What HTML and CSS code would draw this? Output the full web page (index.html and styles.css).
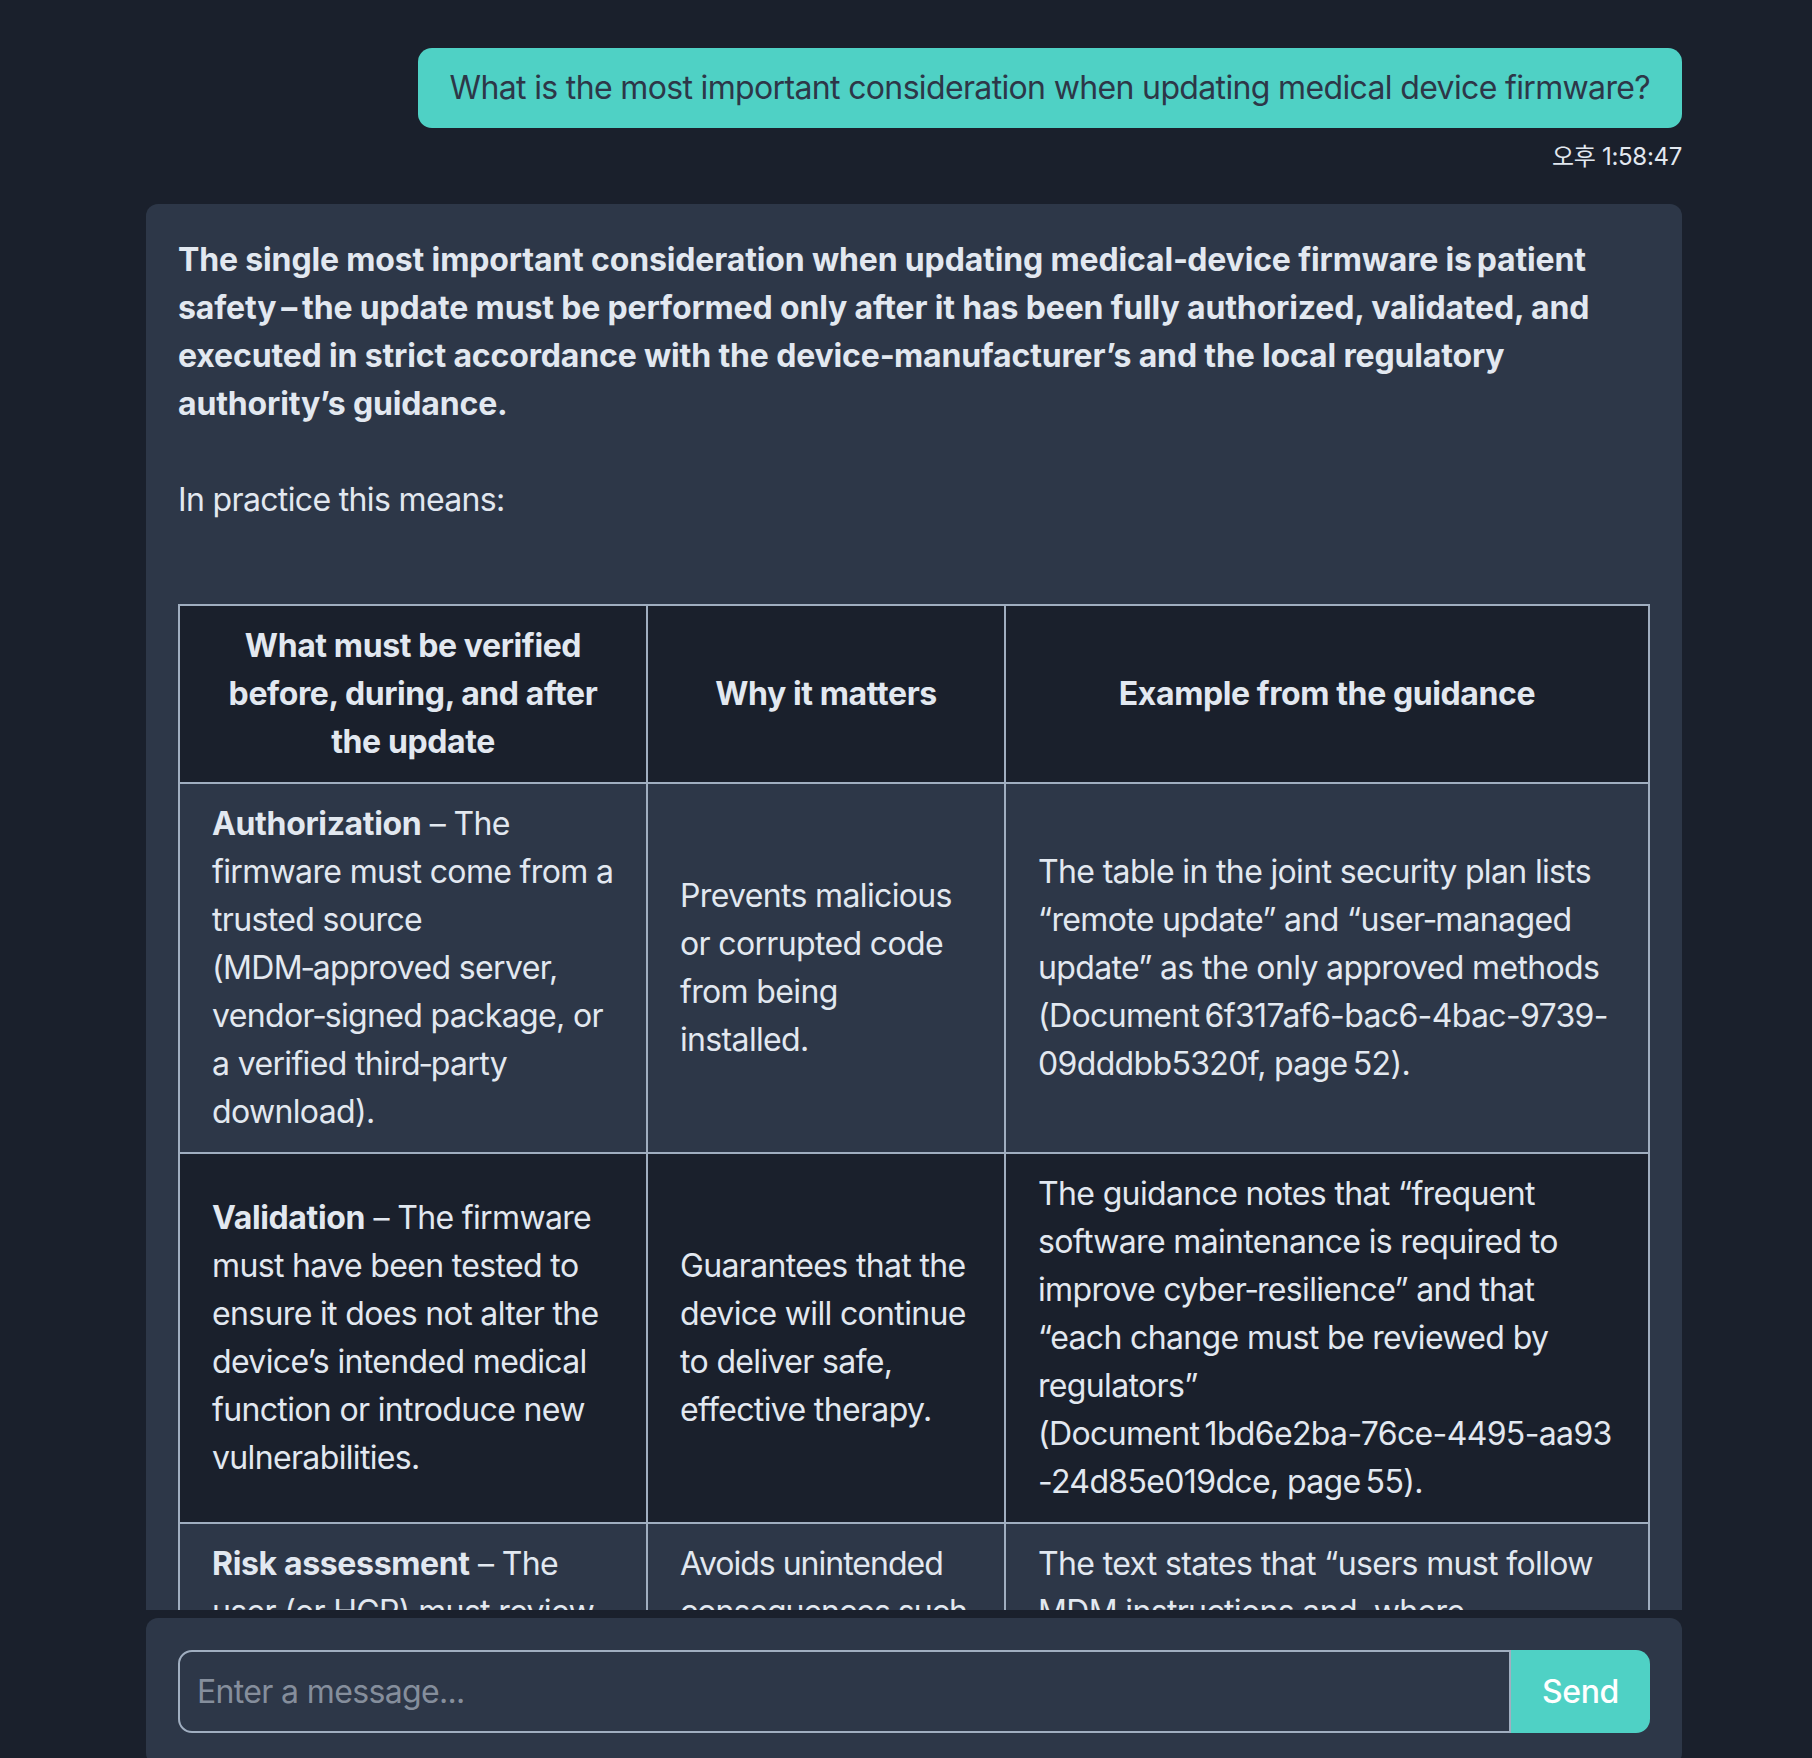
FILE: index.html
```html
<!DOCTYPE html>
<html lang="en">
<head>
<meta charset="utf-8">
<title>Chat</title>
<link rel="stylesheet" href="styles.css">
</head>
<body>
<div class="app">
  <main class="messages">
    <div class="msg-user">
      <div class="bubble">What is the most important consideration when updating medical device firmware?</div>
      <div class="time">오후 1:58:47</div>
    </div>
    <article class="answer">
      <p class="lead">The single most important consideration when updating medical‑device firmware is&#8239;patient safety&#8239;–&#8239;the update must be performed only after it has been fully authorized, validated, and executed in strict accordance with the device‑manufacturer’s and the local regulatory authority’s guidance.</p>
      <p class="plain">In practice this means:</p>
      <table class="guide">
        <colgroup>
          <col class="c1">
          <col class="c2">
          <col class="c3">
        </colgroup>
        <thead>
          <tr>
            <th>What must be verified before, during, and after the update</th>
            <th>Why it matters</th>
            <th>Example from the guidance</th>
          </tr>
        </thead>
        <tbody>
          <tr>
            <td><strong>Authorization</strong> – The firmware must come from a trusted source (MDM‑approved server, vendor‑signed package, or a verified third‑party download).</td>
            <td>Prevents malicious or corrupted code from being installed.</td>
            <td>The table in the joint security plan lists “remote update” and “user‑managed update” as the only approved methods (Document&#8239;6f317af6-bac6-4bac-9739-09dddbb5320f, page&#8239;52).</td>
          </tr>
          <tr>
            <td><strong>Validation</strong> – The firmware must have been tested to ensure it does not alter the device’s intended medical function or introduce new vulnerabilities.</td>
            <td>Guarantees that the device will continue to deliver safe, effective therapy.</td>
            <td>The guidance notes that “frequent software maintenance is required to improve cyber‑resilience” and that “each change must be reviewed by regulators” <span class="docref">(Document&#8239;1bd6e2ba-76ce-4495-aa93</span><wbr>-24d85e019dce, page&#8239;55).</td>
          </tr>
          <tr>
            <td><strong>Risk assessment</strong> – The user (or HCP) must review the potential impact of the update on therapy and schedule it when the device is not in use.</td>
            <td><span class="tight">Avoids unintended consequences such</span> as interrupted therapy, lost settings, or loss of patient data.</td>
            <td>The text states that “users must follow MDM instructions and, where appropriate, consult their healthcare provider before updating” <span class="docref">(Document&#8239;1bd6e2ba-76ce-4495-aa93</span><wbr>-24d85e019dce, page&#8239;56).</td>
          </tr>
        </tbody>
      </table>
    </article>
  </main>
  <footer class="composer">
    <form class="input-group">
      <input class="field" type="text" placeholder="Enter a message...">
      <button class="send" type="button">Send</button>
    </form>
  </footer>
</div>
</body>
</html>
```

FILE: styles.css
```css
* {
  box-sizing: border-box;
}

html, body {
  margin: 0;
  padding: 0;
  background: #1a202c;
}

body {
  font-family: "Inter", "Noto Sans CJK KR", sans-serif;
  color: #e2e8f0;
  font-size: 32px;
  line-height: 48px;
  letter-spacing: -0.65px;
}

.app {
  height: 100vh;
  display: flex;
  flex-direction: column;
  overflow: hidden;
}

.messages {
  height: calc(100vh - 148px);
  flex: none;
  overflow: hidden;
  padding: 48px 130px 0 146px;
}

.msg-user {
  display: flex;
  flex-direction: column;
  align-items: flex-end;
}

.bubble {
  background: #4fd1c5;
  color: #2d3748;
  padding: 16px 32px;
  border-radius: 14px;
  max-width: 90%;
}

.time {
  margin-top: 11px;
  font-size: 24px;
  line-height: 36px;
  letter-spacing: -0.3px;
  color: #e2e8f0;
}

.answer {
  margin-top: 29px;
  background: #2d3748;
  border-radius: 12px;
  padding: 32px;
}

.answer p {
  margin: 0;
}

.lead {
  font-weight: 700;
  letter-spacing: -0.15px;
}

.answer .plain {
  margin-top: 48px;
}

.guide {
  margin-top: 80px;
  width: 100%;
  border-collapse: collapse;
  table-layout: fixed;
}

.c1 { width: 468px; }
.c2 { width: 358px; }
.c3 { width: 644px; }

.guide th,
.guide td {
  border: 2px solid #a0aec0;
  padding: 16px 32px;
  vertical-align: middle;
}

.guide th {
  font-weight: 700;
  letter-spacing: -0.4px;
  text-align: center;
  background: #1a202c;
}

.guide td {
  text-align: left;
}

.guide tbody tr:nth-child(even) td {
  background: #1a202c;
}

.guide strong {
  font-weight: 700;
  letter-spacing: -0.35px;
}

.docref {
  white-space: nowrap;
}

.tight {
  letter-spacing: -1px;
}

.composer {
  flex: none;
  margin: 8px 130px 0 146px;
  padding: 32px;
  background: #2d3748;
  border-radius: 12px;
}

.input-group {
  display: flex;
  height: 83px;
  margin: 0;
}

.field {
  flex: 1;
  min-width: 0;
  background: transparent;
  border: 2px solid #a0aec0;
  border-radius: 14px 0 0 14px;
  padding: 0 17px;
  font-family: inherit;
  font-size: 32px;
  letter-spacing: -0.65px;
  color: #e2e8f0;
  outline: none;
}

.field::placeholder {
  color: #858e9c;
}

.send {
  width: 139px;
  border: none;
  background: #4fd1c5;
  color: #ffffff;
  font-family: inherit;
  font-size: 32px;
  font-weight: 500;
  letter-spacing: -0.4px;
  border-radius: 0 14px 14px 0;
  cursor: pointer;
}
```
